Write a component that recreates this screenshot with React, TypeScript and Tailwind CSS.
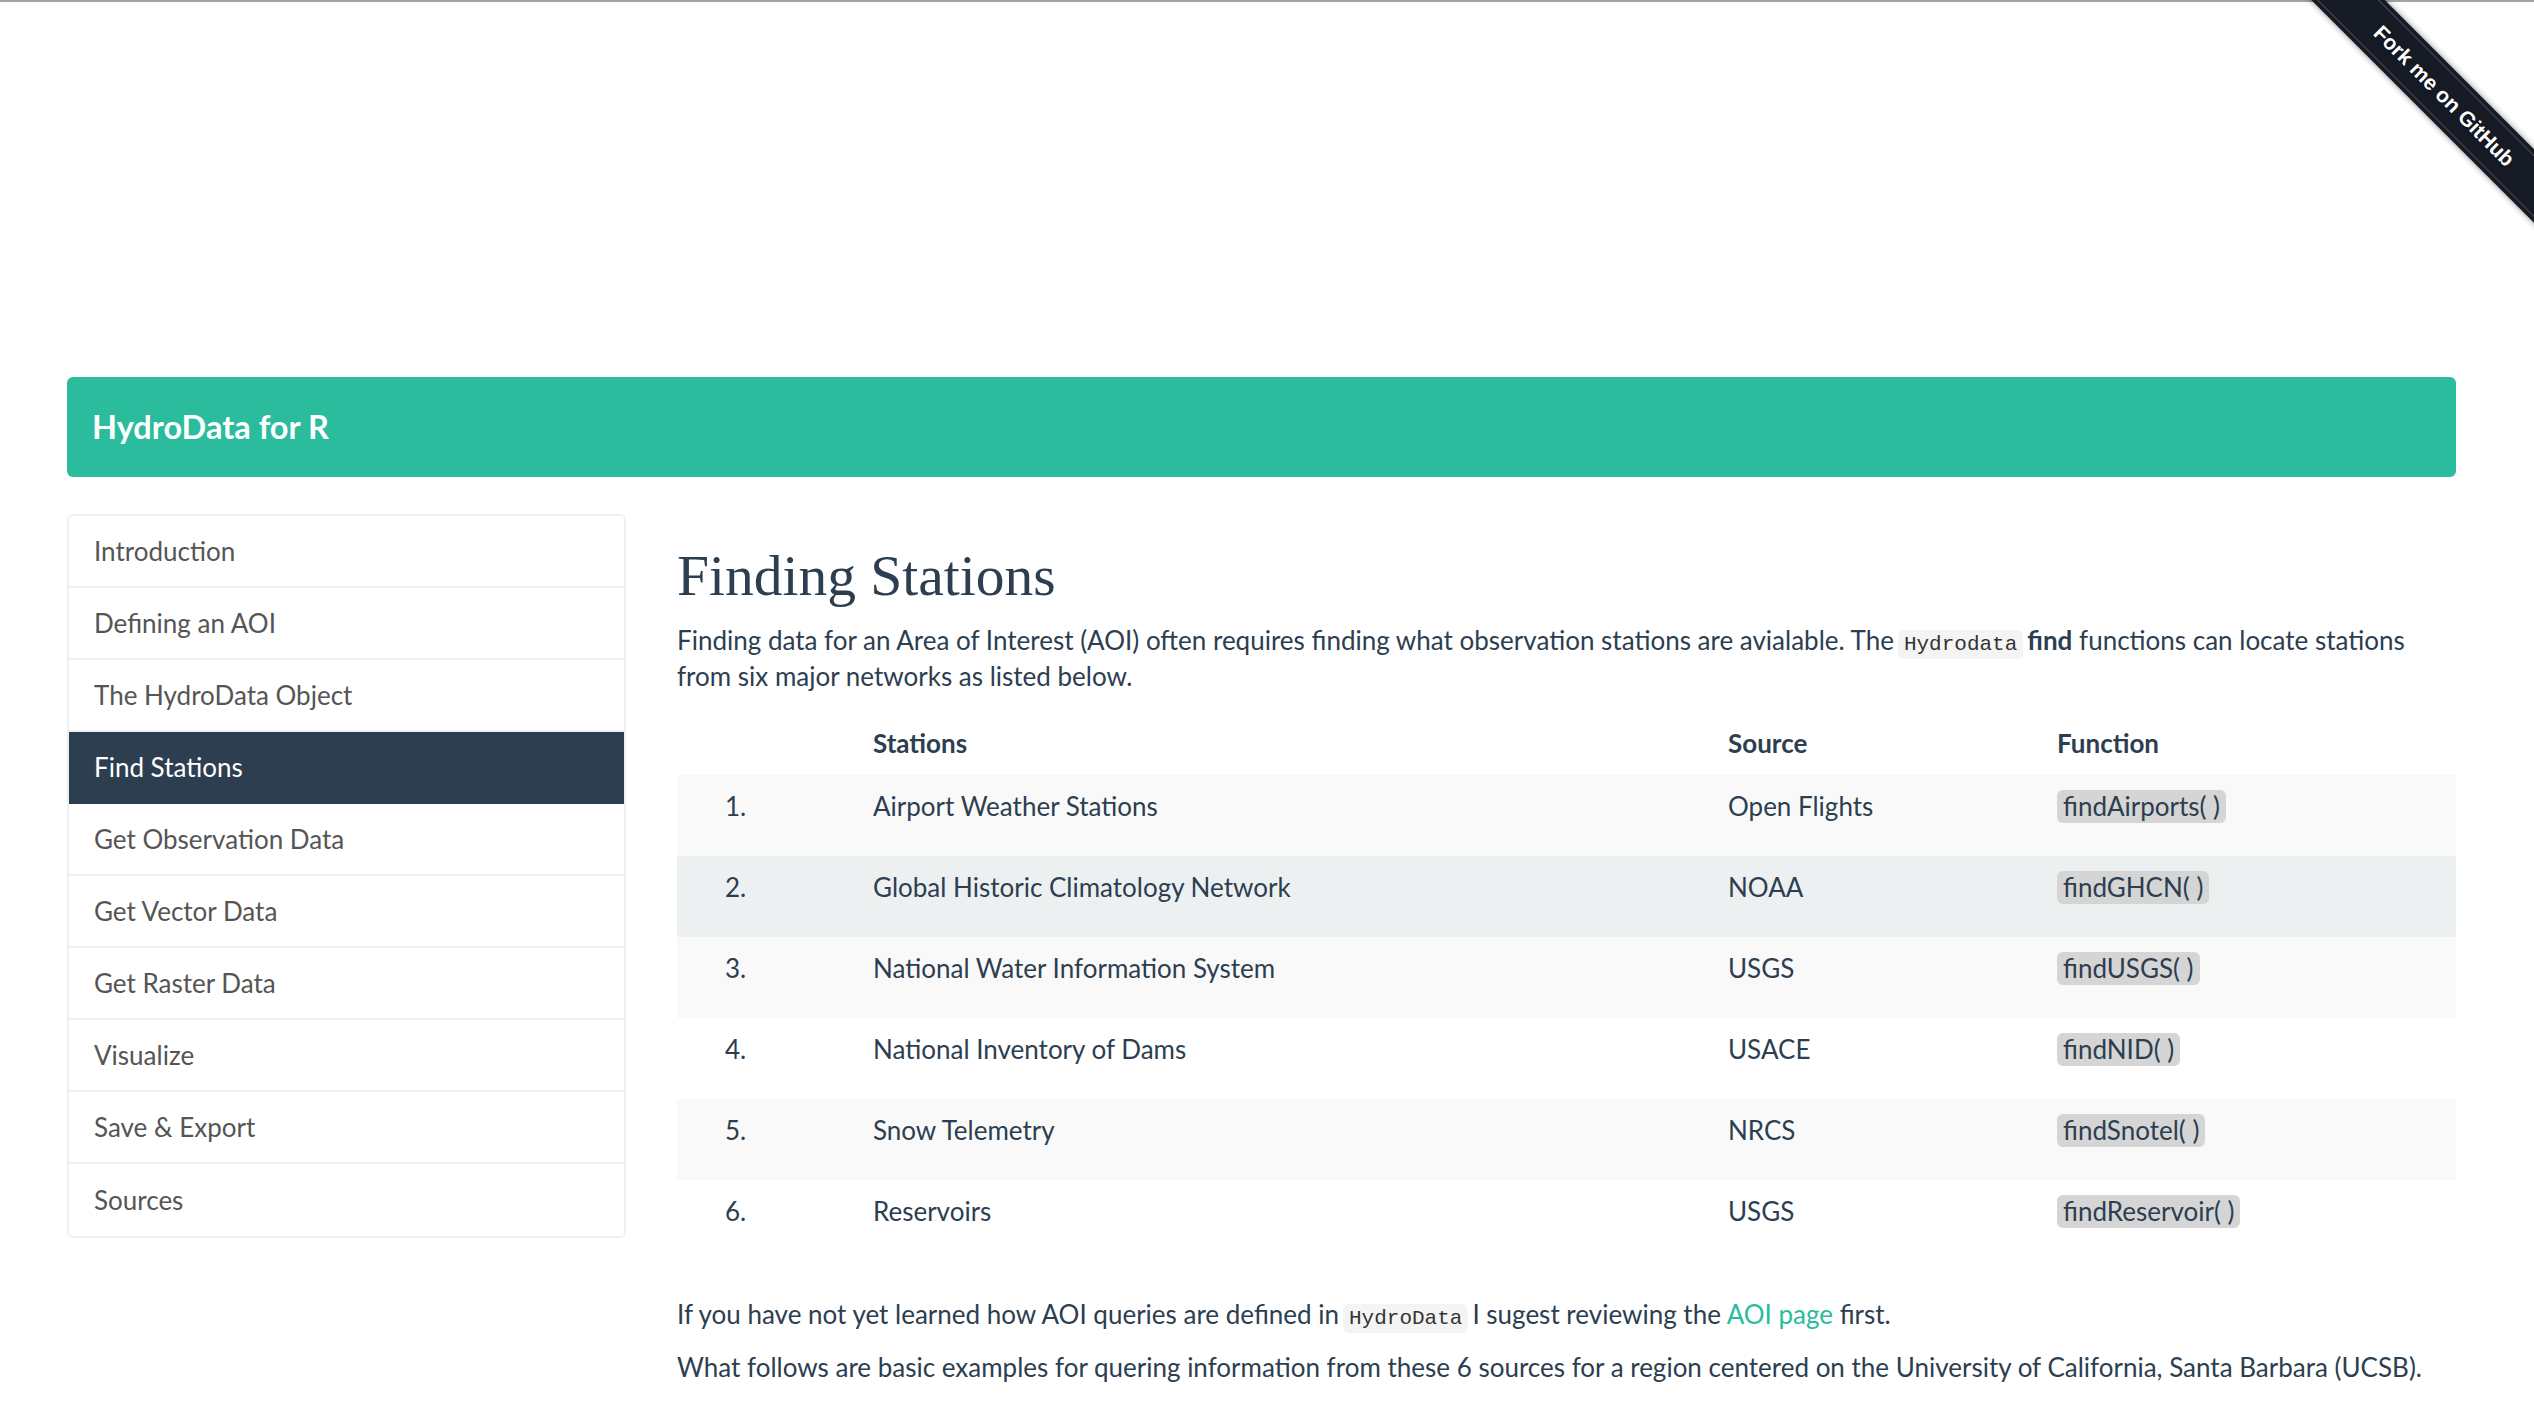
import React from "react";

const navItems = [
  "Introduction",
  "Defining an AOI",
  "The HydroData Object",
  "Find Stations",
  "Get Observation Data",
  "Get Vector Data",
  "Get Raster Data",
  "Visualize",
  "Save & Export",
  "Sources",
];

const rows = [
  { n: "1.", station: "Airport Weather Stations", source: "Open Flights", fn: "findAirports( )", bg: "bg-[#f9f9f9]" },
  { n: "2.", station: "Global Historic Climatology Network", source: "NOAA", fn: "findGHCN( )", bg: "bg-[#ecf0f1]" },
  { n: "3.", station: "National Water Information System", source: "USGS", fn: "findUSGS( )", bg: "bg-[#f9f9f9]" },
  { n: "4.", station: "National Inventory of Dams", source: "USACE", fn: "findNID( )", bg: "bg-white" },
  { n: "5.", station: "Snow Telemetry", source: "NRCS", fn: "findSnotel( )", bg: "bg-[#f9f9f9]" },
  { n: "6.", station: "Reservoirs", source: "USGS", fn: "findReservoir( )", bg: "bg-white" },
];

function Ribbon() {
  return (
    <div className="pointer-events-none absolute right-0 top-0 h-[300px] w-[300px] overflow-hidden">
      <div className="absolute left-0 top-[70px] flex h-[52px] w-[420px] rotate-45 items-center bg-[#151a24] shadow-[0_0_6px_rgba(0,0,0,0.45)]">
        <div className="flex h-[44px] w-full items-center justify-center border-y border-[#4b505a]">
          <span className="text-[21px] font-bold text-white [font-family:'Liberation_Sans',Arial,sans-serif] [text-shadow:0_1px_1px_rgba(0,0,0,0.6)]">
            Fork me on GitHub
          </span>
        </div>
      </div>
    </div>
  );
}

function InlineCode({ children }: { children: React.ReactNode }) {
  return (
    <code className="mx-[4px] rounded-[6px] bg-[#f4f4f4] px-[6px] py-[3px] align-baseline text-[21px] leading-none text-[#333] [font-family:'Liberation_Mono','DejaVu_Sans_Mono',monospace]">
      {children}
    </code>
  );
}

export default function App() {
  return (
    <div className="relative min-h-screen w-full overflow-hidden bg-white text-[#2c3e50] [font-family:Lato,'Noto_Sans',sans-serif]">
      <div className="h-[2px] w-full bg-[#a3a3a3]" />
      <Ribbon />
      <div className="pl-[67px] pr-[78px] pt-[375px]">
        <header className="flex h-[100px] items-center rounded-[6px] bg-[#2abc9d] pl-[25px]">
          <span className="text-[32.5px] font-bold text-white">HydroData for R</span>
        </header>

        <div className="mt-[37px] flex">
          <nav className="flex w-[559px] shrink-0 flex-col self-start overflow-hidden rounded-[6px] border-2 border-[#ecf0f1]">
            {navItems.map((item, i) => {
              const active = item === "Find Stations";
              return (
                <div
                  key={item}
                  className={
                    "flex h-[72px] items-center pl-[25px] text-[26px] " +
                    (i < navItems.length - 1 ? "border-b-2 " : "") +
                    (active
                      ? "border-[#2c3e50] bg-[#2c3e50] text-white"
                      : "border-[#ecf0f1] bg-white text-[#555]")
                  }
                >
                  {item}
                </div>
              );
            })}
          </nav>

          <main className="ml-[51px] flex-1 pt-[30px]">
            <h1 className="text-[57.5px] leading-[63px] font-normal text-[#2c3e50] [font-family:'Liberation_Serif',Georgia,serif]">
              Finding Stations
            </h1>
            <p className="mt-[15px] text-[26px] leading-[36px]">
              Finding data for an Area of Interest (AOI) often requires finding what observation stations are avialable. The
              <InlineCode>Hydrodata</InlineCode>
              <b>find</b> functions can locate stations from six major networks as listed below.
            </p>

            <div className="mt-[17px] text-[26px]">
              <div className="flex h-[64px] items-center font-bold">
                <div className="w-[181px] pl-[48px]" />
                <div className="w-[855px] pl-[15px]">Stations</div>
                <div className="w-[329px] pl-[15px]">Source</div>
                <div className="flex-1 pl-[15px]">Function</div>
              </div>
              {rows.map((r) => (
                <div key={r.n} className={"flex h-[81px] items-start pt-[13px] leading-[37px] " + r.bg}>
                  <div className="w-[181px] pl-[48px]">{r.n}</div>
                  <div className="w-[855px] pl-[15px]">{r.station}</div>
                  <div className="w-[329px] pl-[15px]">{r.source}</div>
                  <div className="flex-1 pl-[15px]">
                    <span className="inline-block rounded-[6px] bg-[#d5d5d5] px-[6px] leading-[33px]">{r.fn}</span>
                  </div>
                </div>
              ))}
            </div>

            <p className="mt-[35px] text-[26px] leading-[36px]">
              If you have not yet learned how AOI queries are defined in
              <InlineCode>HydroData</InlineCode>
              I sugest reviewing the <a className="text-[#2abc9d]">AOI page</a> first.
            </p>
            <p className="mt-[17px] text-[26px] leading-[36px]">
              What follows are basic examples for quering information from these 6 sources for a region centered on the University of California, Santa Barbara (UCSB).
            </p>
          </main>
        </div>
      </div>
    </div>
  );
}
